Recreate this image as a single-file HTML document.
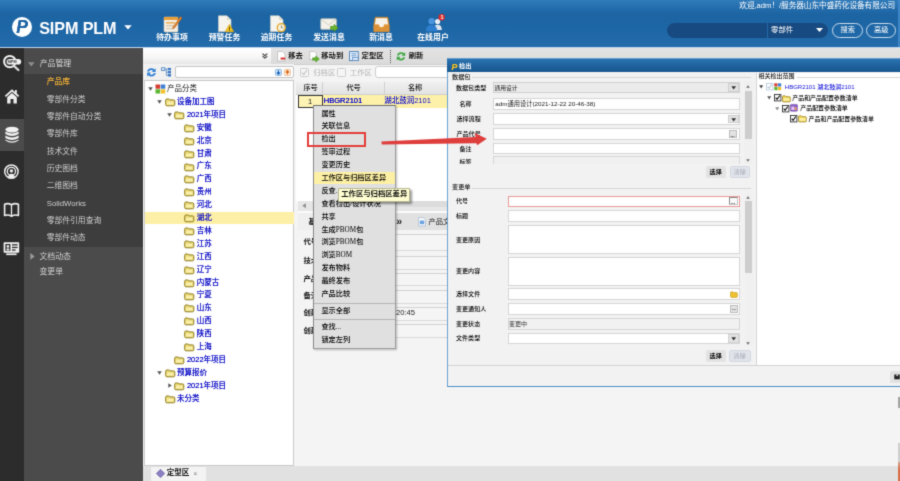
<!DOCTYPE html>
<html lang="zh-CN"><head><meta charset="utf-8"><title>SIPM PLM</title>
<style>
html,body{margin:0;padding:0;}
body{width:900px;height:481px;position:relative;overflow:hidden;background:#f4f4f4;font-family:"Liberation Sans","Noto Sans CJK SC",sans-serif;-webkit-text-size-adjust:none;}
#r{position:absolute;left:0;top:0;width:900px;height:481px;overflow:hidden;filter:url(#bl);}
#r div,#r svg{position:absolute;}
#r svg{overflow:visible;}
.t{white-space:nowrap;}
.m{font-family:"Liberation Serif","Noto Sans CJK SC",sans-serif;}
</style></head><body>
<svg width="0" height="0" style="position:absolute"><defs><filter id="bl" x="0" y="0" width="100%" height="100%" color-interpolation-filters="sRGB"><feConvolveMatrix order="3" kernelMatrix="0.02 0.1 0.02 0.1 0.52 0.1 0.02 0.1 0.02" divisor="1" edgeMode="duplicate" preserveAlpha="true"/></filter></defs></svg>
<div id="r">
<div style="left:0px;top:0px;width:900px;height:47px;background:linear-gradient(#2f7ab9 0%,#2973b3 10%,#1c64a2 30%,#1d66a5 55%,#236baa 100%);"></div>
<div style="left:898px;top:0px;width:2px;height:47px;background:#3d85c6;"></div>
<div style="left:0px;top:47px;width:900px;height:1px;background:#bcd6ec;"></div>
<div style="left:11.7px;top:16.7px;width:20.6px;height:20.6px;background:#fff;border-radius:50%;"></div>
<div class="t" style="left:16.3px;top:17.2px;font-size:17.5px;line-height:20px;color:#1f65a3;font-weight:bold;font-style:italic;text-shadow:0 0 .5px #1f65a3;">P</div>
<div class="t" style="left:39.2px;top:19.0px;font-size:16.2px;line-height:18px;color:#fff;font-weight:bold;letter-spacing:-0.12px;">SIPM PLM</div>
<svg style="left:124px;top:25px" width="8" height="5" viewBox="0 0 8 5"><path d="M0.3 0.3 L7.7 0.3 L4 4.6 Z" fill="#fff"/></svg>
<div class="t" style="left:142px;width:60px;text-align:center;top:32px;font-size:7.9px;line-height:12px;color:#fff;font-weight:bold;">待办事项</div>
<div class="t" style="left:194.5px;width:60px;text-align:center;top:32px;font-size:7.9px;line-height:12px;color:#fff;font-weight:bold;">预警任务</div>
<div class="t" style="left:246.5px;width:60px;text-align:center;top:32px;font-size:7.9px;line-height:12px;color:#fff;font-weight:bold;">逾期任务</div>
<div class="t" style="left:299px;width:60px;text-align:center;top:32px;font-size:7.9px;line-height:12px;color:#fff;font-weight:bold;">发送消息</div>
<div class="t" style="left:351px;width:60px;text-align:center;top:32px;font-size:7.9px;line-height:12px;color:#fff;font-weight:bold;">新消息</div>
<div class="t" style="left:403px;width:60px;text-align:center;top:32px;font-size:7.9px;line-height:12px;color:#fff;font-weight:bold;">在线用户</div>
<svg style="left:163px;top:15px" width="20" height="18" viewBox="0 0 20 18"><rect x="1" y="2" width="14" height="15" rx="1" fill="#f4efe6" stroke="#cbbfa8" stroke-width=".6"/>
<rect x="1" y="2" width="14" height="3" fill="#e9a03b"/>
<rect x="3" y="7" width="9" height="1.6" fill="#e8b05a"/><rect x="3" y="10" width="8" height="1.4" fill="#d8c9aa"/><rect x="3" y="13" width="6" height="1.2" fill="#d8c9aa"/>
<path d="M17.5 1.5 L19 3 L11.5 13 L9.5 14 L10 12 Z" fill="#e8872c" stroke="#a2561a" stroke-width=".5"/></svg>
<svg style="left:217px;top:15px" width="18" height="18" viewBox="0 0 18 18"><path d="M1.5 .8 L10 .8 L14 4.8 L14 16.5 L1.5 16.5 Z" fill="#f6f4ee" stroke="#d8d3c6" stroke-width=".6"/>
<path d="M10 .8 L10 4.8 L14 4.8 Z" fill="#dcd7ca"/>
<path d="M12.5 9.3 L16.8 16.8 L8.2 16.8 Z" fill="#f3c420" stroke="#c79a10" stroke-width=".6"/><rect x="12.1" y="11.8" width=".9" height="2.8" fill="#5a4300"/><rect x="12.1" y="15.1" width=".9" height=".9" fill="#5a4300"/></svg>
<svg style="left:269px;top:15px" width="18" height="18" viewBox="0 0 18 18"><path d="M1.5 .8 L10 .8 L14 4.8 L14 16.5 L1.5 16.5 Z" fill="#f6f4ee" stroke="#d8d3c6" stroke-width=".6"/>
<path d="M10 .8 L10 4.8 L14 4.8 Z" fill="#dcd7ca"/>
<circle cx="12.3" cy="12.6" r="4" fill="#f5f2e6" stroke="#e3a622" stroke-width="1.3"/><path d="M12.3 10.3 L12.3 12.8 L14.2 12.8" stroke="#7a6a40" stroke-width=".7" fill="none"/></svg>
<svg style="left:320px;top:18px" width="19" height="15" viewBox="0 0 19 15"><rect x=".8" y=".8" width="15.5" height="10.5" rx=".8" fill="#f4f2ea" stroke="#cfcabd" stroke-width=".7"/>
<path d="M1 1.2 L8.5 7 L16 1.2" stroke="#c9c3b2" stroke-width=".8" fill="none"/>
<path d="M10.5 8.3 L14 8.3 L14 6.3 L18.2 10 L14 13.6 L14 11.6 L10.5 11.6 Z" fill="#6cb52d" stroke="#3f8012" stroke-width=".5"/></svg>
<svg style="left:373px;top:16px" width="17" height="17" viewBox="0 0 17 17"><path d="M2.2 1.2 L14.8 1.2 L16.2 9 L16.2 15.6 L.8 15.6 L.8 9 Z" fill="#e9a24a" stroke="#c47f28" stroke-width=".6"/>
<path d="M3 2.2 L14 2.2 L15 8.2 L11 8.2 Q11 11 8.5 11 Q6 11 6 8.2 L2 8.2 Z" fill="#f7f3ea"/>
<path d="M.8 9 L5.4 9 Q5.6 12 8.5 12 Q11.4 12 11.6 9 L16.2 9 L16.2 15.6 L.8 15.6 Z" fill="#dd9237"/></svg>
<svg style="left:424px;top:13px" width="22" height="20" viewBox="0 0 22 20"><circle cx="13.6" cy="8.6" r="2.6" fill="#e9eef5"/><path d="M9.5 17 Q9.5 11.8 13.6 11.8 Q17.8 11.8 17.8 17 Z" fill="#dfe6ef"/>
<circle cx="7.6" cy="8.2" r="3.1" fill="#4a95de"/><path d="M2 18.3 Q2 12 7.6 12 Q13.2 12 13.2 18.3 Z" fill="#2e7fd0"/>
<circle cx="17.6" cy="4.2" r="3.2" fill="#dd2b2b"/></svg>
<div class="t" style="left:440.6px;top:13.4px;font-size:5.4px;line-height:8px;color:#fff;font-weight:bold;">1</div>
<div class="t" style="right:5px;top:0.3px;font-size:7.6px;line-height:12px;color:#fff;">欢迎,adm！/服务器山东中盛药化设备有限公司</div>
<div style="left:667px;top:22.5px;width:161px;height:15px;background:#174a80;border-radius:7.5px;"></div>
<div style="left:766.5px;top:22.5px;width:1.2px;height:15px;background:#2368aa;"></div>
<div class="t" style="left:771px;top:24.0px;font-size:7.4px;line-height:12px;color:#fff;">零部件</div>
<svg style="left:816px;top:28px" width="7" height="4" viewBox="0 0 7 4"><path d="M0 0 L7 0 L3.5 4 Z" fill="#fff"/></svg>
<div style="left:832px;top:22.5px;width:31px;height:15px;border:0.8px solid #c9dcee;border-radius:7.5px;box-sizing:border-box;"></div>
<div class="t" style="left:840.5px;top:24.0px;font-size:7.2px;line-height:12px;color:#fff;">搜索</div>
<div style="left:866px;top:22.5px;width:30px;height:15px;border:0.8px solid #c9dcee;border-radius:7.5px;box-sizing:border-box;"></div>
<div class="t" style="left:874px;top:24.0px;font-size:7.2px;line-height:12px;color:#fff;">高级</div>
<div style="left:0px;top:48px;width:24px;height:433px;background:#2c2c2c;"></div>
<div style="left:0px;top:119px;width:24px;height:31.5px;background:#4b4b4b;"></div>
<div style="left:24px;top:48px;width:119px;height:433px;background:#4b4b4b;"></div>
<div style="left:24px;top:73.9px;width:119px;height:173.2px;background:#3d3d3d;"></div>
<svg style="left:28px;top:61.6px" width="7" height="5" viewBox="0 0 7 5"><path d="M0 .3 L6.6 .3 L3.3 4.6 Z" fill="#8f8f8f"/></svg>
<div class="t" style="left:39.7px;top:57.8px;font-size:7.9px;line-height:12px;color:#dcdcdc;">产品管理</div>
<div class="t" style="left:46.7px;top:76.4px;font-size:7.8px;line-height:12px;color:#f5b236;font-weight:500;">产品库</div>
<div class="t" style="left:46.7px;top:93.7px;font-size:7.8px;line-height:12px;color:#cdcdcd;">零部件分类</div>
<div class="t" style="left:46.7px;top:111.0px;font-size:7.8px;line-height:12px;color:#cdcdcd;">零部件自动分类</div>
<div class="t" style="left:46.7px;top:128.3px;font-size:7.8px;line-height:12px;color:#cdcdcd;">零部件库</div>
<div class="t" style="left:46.7px;top:145.6px;font-size:7.8px;line-height:12px;color:#cdcdcd;">技术文件</div>
<div class="t" style="left:46.7px;top:162.9px;font-size:7.8px;line-height:12px;color:#cdcdcd;">历史图档</div>
<div class="t" style="left:46.7px;top:180.2px;font-size:7.8px;line-height:12px;color:#cdcdcd;">二维图档</div>
<div class="t" style="left:46.7px;top:197.5px;font-size:7.8px;line-height:12px;color:#cdcdcd;">SolidWorks</div>
<div class="t" style="left:46.7px;top:214.8px;font-size:7.8px;line-height:12px;color:#cdcdcd;">零部件引用查询</div>
<div class="t" style="left:46.7px;top:232.1px;font-size:7.8px;line-height:12px;color:#cdcdcd;">零部件动态</div>
<svg style="left:29.5px;top:253.2px" width="5" height="7" viewBox="0 0 5 7"><path d="M.3 0 L4.7 3.4 L.3 6.8 Z" fill="#9a9a9a"/></svg>
<div class="t" style="left:39.4px;top:250.7px;font-size:7.9px;line-height:12px;color:#d0d0d0;">文档动态</div>
<div class="t" style="left:39.4px;top:266.1px;font-size:7.9px;line-height:12px;color:#d0d0d0;">变更单</div>
<svg style="left:2px;top:53px" width="20" height="18" viewBox="0 0 20 18"><circle cx="7.8" cy="8.6" r="5.7" fill="none" stroke="#f2f2f2" stroke-width="2"/>
<rect x="4.6" y="6" width="14.6" height="5.6" rx="2.8" fill="#f2f2f2"/>
<path d="M12.4 13.4 L16.4 17" stroke="#dcdcdc" stroke-width="2.3" stroke-linecap="round"/></svg>
<div class="t" style="left:7.6px;top:58.8px;font-size:3.7px;line-height:6px;color:#2c2c2c;font-weight:bold;">SIPM</div>
<svg style="left:3.6px;top:87.6px" width="16" height="16" viewBox="0 0 16 16"><path d="M8 1.2 L.8 7.8 L2 9.1 L8 3.8 L14 9.1 L15.2 7.8 L12.8 5.6 L12.8 2 L11 2 L11 4 Z" fill="#f0f0f0"/>
<path d="M3.2 9.2 L8 5 L12.8 9.2 L12.8 15.4 L9.5 15.4 L9.5 11 L6.5 11 L6.5 15.4 L3.2 15.4 Z" fill="#f0f0f0"/></svg>
<svg style="left:4px;top:126px" width="16" height="18" viewBox="0 0 16 18"><ellipse cx="8" cy="3.6" rx="6.6" ry="2.9" fill="#f2f2f2"/>
<path d="M1.4 5.6 Q8 9.6 14.6 5.6 L14.6 8 Q8 12 1.4 8 Z" fill="#f2f2f2"/>
<path d="M1.4 9.6 Q8 13.6 14.6 9.6 L14.6 12 Q8 16 1.4 12 Z" fill="#f2f2f2"/>
<path d="M1.4 13.5 Q8 17.5 14.6 13.5 L14.6 14.6 Q8 19 1.4 14.6 Z" fill="#f2f2f2"/></svg>
<svg style="left:3px;top:163px" width="18" height="18" viewBox="0 0 18 18"><circle cx="8.4" cy="8.6" r="6.7" fill="none" stroke="#f0f0f0" stroke-width="1.5"/>
<circle cx="8.4" cy="8.4" r="4.1" fill="none" stroke="#f0f0f0" stroke-width="1.3"/>
<circle cx="8.4" cy="7.9" r="1.7" fill="#f0f0f0"/><path d="M5 15.3 Q5.2 10.8 8.4 10.8 Q11.6 10.8 11.8 15.3 Z" fill="#f0f0f0"/></svg>
<svg style="left:3px;top:202px" width="18" height="16" viewBox="0 0 18 16"><path d="M1.6 2.2 Q5.2 .8 8.5 2.8 Q11.8 .8 15.4 2.2 L15.4 13.4 Q11.8 12.2 8.5 14.2 Q5.2 12.2 1.6 13.4 Z" fill="none" stroke="#f0f0f0" stroke-width="1.6" stroke-linejoin="round"/>
<path d="M8.5 3 L8.5 14" stroke="#f0f0f0" stroke-width="1.3"/></svg>
<svg style="left:3px;top:241px" width="18" height="16" viewBox="0 0 18 16"><rect x=".6" y="1.2" width="15.6" height="10.6" rx=".8" fill="#f0f0f0"/>
<rect x="2.4" y="3" width="5" height="7" fill="#2c2c2c"/><circle cx="4.9" cy="5.4" r="1.3" fill="#f0f0f0"/><path d="M3.2 9.4 Q3.3 7.2 4.9 7.2 Q6.5 7.2 6.6 9.4 Z" fill="#f0f0f0"/>
<rect x="9" y="3.2" width="5.6" height="1.3" fill="#2c2c2c"/><rect x="9" y="5.8" width="5.6" height="1.3" fill="#2c2c2c"/><rect x="9" y="8.4" width="3.6" height="1.3" fill="#2c2c2c"/>
<rect x="3.2" y="12.4" width="10.4" height="1.7" fill="#f0f0f0"/></svg>
<div style="left:143px;top:48px;width:757px;height:433px;background:#f4f4f4;"></div>
<div style="left:143px;top:48px;width:128.3px;height:15.6px;background:linear-gradient(#ffffff,#f7f7f7 55%,#e6e6e6);"></div>
<div style="left:271px;top:48px;width:629px;height:15.6px;background:linear-gradient(#e3e3e3,#dbdbdb);"></div>
<div style="left:143px;top:63.6px;width:757px;height:0.8px;background:#cfcfcf;"></div>
<svg style="left:261.8px;top:53.4px" width="6" height="6" viewBox="0 0 6 6"><path d="M.5 .7 L2.9 2.7 L5.3 .7 M.5 3.1 L2.9 5.1 L5.3 3.1" stroke="#3a3a3a" stroke-width="1.1" fill="none"/></svg>
<svg style="left:277px;top:51px" width="9" height="10.5" viewBox="0 0 9 10.5"><path d="M.6 .5 L5.6 .5 L8 2.9 L8 10 L.6 10 Z" fill="#fff" stroke="#a9a9a9" stroke-width=".6"/>
<rect x="3.6" y="6.6" width="4.6" height="1.9" fill="#d92a2a"/></svg>
<div class="t" style="left:288.3px;top:50.2px;font-size:7.3px;line-height:12px;color:#111;font-weight:bold;">移去</div>
<svg style="left:309px;top:50.5px" width="11" height="11.5" viewBox="0 0 11 11.5"><path d="M.8 .5 L5.4 .5 L7.4 2.6 L7.4 8.6 L.8 8.6 Z" fill="#fff" stroke="#a9a9a9" stroke-width=".6"/>
<path d="M3.6 6.8 L6.8 6.8 L6.8 4.9 L10.4 8 L6.8 11.1 L6.8 9.2 L3.6 9.2 Z" fill="#5fb32a" stroke="#3a7d12" stroke-width=".4"/></svg>
<div class="t" style="left:321.3px;top:50.2px;font-size:7.3px;line-height:12px;color:#111;font-weight:bold;">移动到</div>
<svg style="left:349px;top:51px" width="10" height="10.5" viewBox="0 0 10 10.5"><rect x=".6" y=".6" width="8.6" height="9" fill="#eef5fc" stroke="#3f79b7" stroke-width=".9"/>
<rect x="2.4" y="2.3" width="5" height="1" fill="#5e94cc"/><rect x="2.4" y="4.3" width="5" height="1" fill="#5e94cc"/><rect x="3.6" y="6.6" width="5.6" height="3" fill="#d7e6f5" stroke="#3f79b7" stroke-width=".6"/></svg>
<div class="t" style="left:361.6px;top:50.2px;font-size:7.3px;line-height:12px;color:#111;font-weight:bold;">定型区</div>
<div style="left:390px;top:49.5px;width:0px;height:13px;border-left:1px dotted #555;"></div>
<svg style="left:396px;top:51px" width="10" height="10.5" viewBox="0 0 10 10.5"><path d="M1 4.4 Q1.8 1.2 5.2 1.2 Q7 1.2 8 2.4 L9.2 1.2 L9.2 4.8 L5.6 4.8 L6.8 3.6 Q6.2 2.8 5.2 2.8 Q3.2 2.8 2.8 4.4 Z" fill="#36a53a"/>
<path d="M9 6.2 Q8.2 9.4 4.8 9.4 Q3 9.4 2 8.2 L.8 9.4 L.8 5.8 L4.4 5.8 L3.2 7 Q3.8 7.8 4.8 7.8 Q6.8 7.8 7.2 6.2 Z" fill="#36a53a"/></svg>
<div class="t" style="left:408.8px;top:50.2px;font-size:7.3px;line-height:12px;color:#111;font-weight:bold;">刷新</div>
<div style="left:143px;top:64.4px;width:151.3px;height:15.6px;background:#f1f1f1;"></div>
<svg style="left:146px;top:66.5px" width="11" height="10.5" viewBox="0 0 11 10.5"><path d="M1 4.6 Q1.8 1.2 5.4 1.2 Q7.4 1.2 8.4 2.4 L9.6 1.2 L9.6 5 L5.8 5 L7.1 3.7 Q6.4 2.9 5.4 2.9 Q3.3 2.9 2.9 4.6 Z" fill="#2f7fd6"/>
<path d="M9.8 6 Q9 9.4 5.4 9.4 Q3.4 9.4 2.4 8.2 L1.2 9.4 L1.2 5.6 L5 5.6 L3.7 6.9 Q4.4 7.7 5.4 7.7 Q7.5 7.7 7.9 6 Z" fill="#2f7fd6"/></svg>
<svg style="left:161px;top:67px" width="11" height="10" viewBox="0 0 11 10"><rect x=".6" y=".8" width="3.2" height="2.6" fill="none" stroke="#3b78c2" stroke-width=".8"/><path d="M4 2.1 L6.4 2.1 M5.4 2.1 L5.4 8.4 L6.6 8.4 M5.4 5.2 L6.6 5.2" stroke="#3b78c2" stroke-width=".7" fill="none"/>
<rect x="6.8" y=".9" width="3.2" height="2.4" fill="#3b78c2"/><rect x="6.8" y="4" width="3.2" height="2.4" fill="#3b78c2"/><rect x="6.8" y="7.1" width="3.2" height="2.4" fill="#3b78c2"/></svg>
<div style="left:175px;top:66px;width:118.5px;height:12.4px;background:#fff;border:0.8px solid #c6c6c6;border-radius:2px;box-sizing:border-box;"></div>
<svg style="left:275px;top:69.2px" width="7" height="7" viewBox="0 0 7 7"><rect x=".4" y=".4" width="6" height="6" rx=".8" fill="#d9e9f8" stroke="#6f9fd2" stroke-width=".7"/><path d="M3.4 1.3 L3.4 4.8 M1.8 3.3 L3.4 5.2 L5 3.3" stroke="#1868c0" stroke-width="1.2" fill="none"/></svg>
<svg style="left:284.2px;top:69.2px" width="7" height="7" viewBox="0 0 7 7"><rect x=".4" y=".4" width="6" height="6" rx=".8" fill="#fdeedd" stroke="#e2ad80" stroke-width=".7"/><path d="M3.4 5.5 L3.4 2 M1.8 3.5 L3.4 1.6 L5 3.5" stroke="#e06a1a" stroke-width="1.2" fill="none"/></svg>
<div style="left:143.6px;top:80px;width:150.7px;height:386px;background:#fff;border:0.8px solid #c9c9c9;box-sizing:border-box;"></div>
<svg style="left:147.6px;top:87.0px" width="5" height="4" viewBox="0 0 5 4"><path d="M.2 .3 L4.8 .3 L2.5 3.8 Z" fill="#555"/></svg>
<svg style="left:155.2px;top:84.0px" width="11" height="10" viewBox="0 0 11 10"><rect x=".5" y=".5" width="4.6" height="4.2" fill="#d63b30"/><rect x="5.7" y=".5" width="4.6" height="4.2" fill="#3f7fd4"/><rect x=".5" y="5.3" width="4.6" height="4.2" fill="#5cb531"/><rect x="5.7" y="5.3" width="4.6" height="4.2" fill="#f0c22b"/></svg>
<div class="t" style="left:167px;top:83.0px;font-size:7.5px;line-height:12px;color:#111;">产品分类</div>
<svg style="left:157.4px;top:99.9px" width="5" height="4" viewBox="0 0 5 4"><path d="M.2 .3 L4.8 .3 L2.5 3.8 Z" fill="#555"/></svg>
<svg style="left:164.6px;top:98.0px" width="11" height="9" viewBox="0 0 11 9"><path d="M.7 2.2 Q.7 1 1.9 1 L3.8 1 Q4.6 1 5 1.9 L8.6 1.9 Q9.8 1.9 9.8 3.1 L9.8 6.6 Q9.8 7.8 8.6 7.8 L1.9 7.8 Q.7 7.8 .7 6.6 Z" fill="#e9d772" stroke="#8f7d22" stroke-width="1"/>
<path d="M1.8 3.6 L8.6 3.6 L8.6 6.6 L1.8 6.6 Z" fill="#f8efaa"/></svg>
<div class="t" style="left:177.10000000000002px;top:95.9px;font-size:7.5px;line-height:12px;color:#1414c8;text-shadow:0 0 .2px #1414c8;">设备加工图</div>
<svg style="left:167.2px;top:112.8px" width="5" height="4" viewBox="0 0 5 4"><path d="M.2 .3 L4.8 .3 L2.5 3.8 Z" fill="#555"/></svg>
<svg style="left:174.39999999999998px;top:110.89999999999999px" width="11" height="9" viewBox="0 0 11 9"><path d="M.7 2.2 Q.7 1 1.9 1 L3.8 1 Q4.6 1 5 1.9 L8.6 1.9 Q9.8 1.9 9.8 3.1 L9.8 6.6 Q9.8 7.8 8.6 7.8 L1.9 7.8 Q.7 7.8 .7 6.6 Z" fill="#e9d772" stroke="#8f7d22" stroke-width="1"/>
<path d="M1.8 3.6 L8.6 3.6 L8.6 6.6 L1.8 6.6 Z" fill="#f8efaa"/></svg>
<div class="t" style="left:186.9px;top:108.8px;font-size:7.5px;line-height:12px;color:#1414c8;text-shadow:0 0 .2px #1414c8;">2021年项目</div>
<svg style="left:184.2px;top:123.8px" width="11" height="9" viewBox="0 0 11 9"><path d="M.7 2.2 Q.7 1 1.9 1 L3.8 1 Q4.6 1 5 1.9 L8.6 1.9 Q9.8 1.9 9.8 3.1 L9.8 6.6 Q9.8 7.8 8.6 7.8 L1.9 7.8 Q.7 7.8 .7 6.6 Z" fill="#e9d772" stroke="#8f7d22" stroke-width="1"/>
<path d="M1.8 3.6 L8.6 3.6 L8.6 6.6 L1.8 6.6 Z" fill="#f8efaa"/></svg>
<div class="t" style="left:196.70000000000002px;top:121.7px;font-size:7.5px;line-height:12px;color:#1414c8;text-shadow:0 0 .2px #1414c8;">安徽</div>
<svg style="left:184.2px;top:136.7px" width="11" height="9" viewBox="0 0 11 9"><path d="M.7 2.2 Q.7 1 1.9 1 L3.8 1 Q4.6 1 5 1.9 L8.6 1.9 Q9.8 1.9 9.8 3.1 L9.8 6.6 Q9.8 7.8 8.6 7.8 L1.9 7.8 Q.7 7.8 .7 6.6 Z" fill="#e9d772" stroke="#8f7d22" stroke-width="1"/>
<path d="M1.8 3.6 L8.6 3.6 L8.6 6.6 L1.8 6.6 Z" fill="#f8efaa"/></svg>
<div class="t" style="left:196.70000000000002px;top:134.6px;font-size:7.5px;line-height:12px;color:#1414c8;text-shadow:0 0 .2px #1414c8;">北京</div>
<svg style="left:184.2px;top:149.6px" width="11" height="9" viewBox="0 0 11 9"><path d="M.7 2.2 Q.7 1 1.9 1 L3.8 1 Q4.6 1 5 1.9 L8.6 1.9 Q9.8 1.9 9.8 3.1 L9.8 6.6 Q9.8 7.8 8.6 7.8 L1.9 7.8 Q.7 7.8 .7 6.6 Z" fill="#e9d772" stroke="#8f7d22" stroke-width="1"/>
<path d="M1.8 3.6 L8.6 3.6 L8.6 6.6 L1.8 6.6 Z" fill="#f8efaa"/></svg>
<div class="t" style="left:196.70000000000002px;top:147.5px;font-size:7.5px;line-height:12px;color:#1414c8;text-shadow:0 0 .2px #1414c8;">甘肃</div>
<svg style="left:184.2px;top:162.5px" width="11" height="9" viewBox="0 0 11 9"><path d="M.7 2.2 Q.7 1 1.9 1 L3.8 1 Q4.6 1 5 1.9 L8.6 1.9 Q9.8 1.9 9.8 3.1 L9.8 6.6 Q9.8 7.8 8.6 7.8 L1.9 7.8 Q.7 7.8 .7 6.6 Z" fill="#e9d772" stroke="#8f7d22" stroke-width="1"/>
<path d="M1.8 3.6 L8.6 3.6 L8.6 6.6 L1.8 6.6 Z" fill="#f8efaa"/></svg>
<div class="t" style="left:196.70000000000002px;top:160.4px;font-size:7.5px;line-height:12px;color:#1414c8;text-shadow:0 0 .2px #1414c8;">广东</div>
<svg style="left:184.2px;top:175.4px" width="11" height="9" viewBox="0 0 11 9"><path d="M.7 2.2 Q.7 1 1.9 1 L3.8 1 Q4.6 1 5 1.9 L8.6 1.9 Q9.8 1.9 9.8 3.1 L9.8 6.6 Q9.8 7.8 8.6 7.8 L1.9 7.8 Q.7 7.8 .7 6.6 Z" fill="#e9d772" stroke="#8f7d22" stroke-width="1"/>
<path d="M1.8 3.6 L8.6 3.6 L8.6 6.6 L1.8 6.6 Z" fill="#f8efaa"/></svg>
<div class="t" style="left:196.70000000000002px;top:173.3px;font-size:7.5px;line-height:12px;color:#1414c8;text-shadow:0 0 .2px #1414c8;">广西</div>
<svg style="left:184.2px;top:188.29999999999998px" width="11" height="9" viewBox="0 0 11 9"><path d="M.7 2.2 Q.7 1 1.9 1 L3.8 1 Q4.6 1 5 1.9 L8.6 1.9 Q9.8 1.9 9.8 3.1 L9.8 6.6 Q9.8 7.8 8.6 7.8 L1.9 7.8 Q.7 7.8 .7 6.6 Z" fill="#e9d772" stroke="#8f7d22" stroke-width="1"/>
<path d="M1.8 3.6 L8.6 3.6 L8.6 6.6 L1.8 6.6 Z" fill="#f8efaa"/></svg>
<div class="t" style="left:196.70000000000002px;top:186.2px;font-size:7.5px;line-height:12px;color:#1414c8;text-shadow:0 0 .2px #1414c8;">贵州</div>
<svg style="left:184.2px;top:201.20000000000002px" width="11" height="9" viewBox="0 0 11 9"><path d="M.7 2.2 Q.7 1 1.9 1 L3.8 1 Q4.6 1 5 1.9 L8.6 1.9 Q9.8 1.9 9.8 3.1 L9.8 6.6 Q9.8 7.8 8.6 7.8 L1.9 7.8 Q.7 7.8 .7 6.6 Z" fill="#e9d772" stroke="#8f7d22" stroke-width="1"/>
<path d="M1.8 3.6 L8.6 3.6 L8.6 6.6 L1.8 6.6 Z" fill="#f8efaa"/></svg>
<div class="t" style="left:196.70000000000002px;top:199.1px;font-size:7.5px;line-height:12px;color:#1414c8;text-shadow:0 0 .2px #1414c8;">河北</div>
<div style="left:145px;top:211.6px;width:148.5px;height:12.9px;background:#fdf0a6;"></div>
<svg style="left:184.2px;top:214.1px" width="11" height="9" viewBox="0 0 11 9"><path d="M.7 2.2 Q.7 1 1.9 1 L3.8 1 Q4.6 1 5 1.9 L8.6 1.9 Q9.8 1.9 9.8 3.1 L9.8 6.6 Q9.8 7.8 8.6 7.8 L1.9 7.8 Q.7 7.8 .7 6.6 Z" fill="#e9d772" stroke="#8f7d22" stroke-width="1"/>
<path d="M1.8 3.6 L8.6 3.6 L8.6 6.6 L1.8 6.6 Z" fill="#f8efaa"/></svg>
<div class="t" style="left:196.70000000000002px;top:212.0px;font-size:7.5px;line-height:12px;color:#1414c8;text-shadow:0 0 .2px #1414c8;">湖北</div>
<svg style="left:184.2px;top:227.0px" width="11" height="9" viewBox="0 0 11 9"><path d="M.7 2.2 Q.7 1 1.9 1 L3.8 1 Q4.6 1 5 1.9 L8.6 1.9 Q9.8 1.9 9.8 3.1 L9.8 6.6 Q9.8 7.8 8.6 7.8 L1.9 7.8 Q.7 7.8 .7 6.6 Z" fill="#e9d772" stroke="#8f7d22" stroke-width="1"/>
<path d="M1.8 3.6 L8.6 3.6 L8.6 6.6 L1.8 6.6 Z" fill="#f8efaa"/></svg>
<div class="t" style="left:196.70000000000002px;top:224.9px;font-size:7.5px;line-height:12px;color:#1414c8;text-shadow:0 0 .2px #1414c8;">吉林</div>
<svg style="left:184.2px;top:239.9px" width="11" height="9" viewBox="0 0 11 9"><path d="M.7 2.2 Q.7 1 1.9 1 L3.8 1 Q4.6 1 5 1.9 L8.6 1.9 Q9.8 1.9 9.8 3.1 L9.8 6.6 Q9.8 7.8 8.6 7.8 L1.9 7.8 Q.7 7.8 .7 6.6 Z" fill="#e9d772" stroke="#8f7d22" stroke-width="1"/>
<path d="M1.8 3.6 L8.6 3.6 L8.6 6.6 L1.8 6.6 Z" fill="#f8efaa"/></svg>
<div class="t" style="left:196.70000000000002px;top:237.8px;font-size:7.5px;line-height:12px;color:#1414c8;text-shadow:0 0 .2px #1414c8;">江苏</div>
<svg style="left:184.2px;top:252.80000000000004px" width="11" height="9" viewBox="0 0 11 9"><path d="M.7 2.2 Q.7 1 1.9 1 L3.8 1 Q4.6 1 5 1.9 L8.6 1.9 Q9.8 1.9 9.8 3.1 L9.8 6.6 Q9.8 7.8 8.6 7.8 L1.9 7.8 Q.7 7.8 .7 6.6 Z" fill="#e9d772" stroke="#8f7d22" stroke-width="1"/>
<path d="M1.8 3.6 L8.6 3.6 L8.6 6.6 L1.8 6.6 Z" fill="#f8efaa"/></svg>
<div class="t" style="left:196.70000000000002px;top:250.7px;font-size:7.5px;line-height:12px;color:#1414c8;text-shadow:0 0 .2px #1414c8;">江西</div>
<svg style="left:184.2px;top:265.70000000000005px" width="11" height="9" viewBox="0 0 11 9"><path d="M.7 2.2 Q.7 1 1.9 1 L3.8 1 Q4.6 1 5 1.9 L8.6 1.9 Q9.8 1.9 9.8 3.1 L9.8 6.6 Q9.8 7.8 8.6 7.8 L1.9 7.8 Q.7 7.8 .7 6.6 Z" fill="#e9d772" stroke="#8f7d22" stroke-width="1"/>
<path d="M1.8 3.6 L8.6 3.6 L8.6 6.6 L1.8 6.6 Z" fill="#f8efaa"/></svg>
<div class="t" style="left:196.70000000000002px;top:263.6px;font-size:7.5px;line-height:12px;color:#1414c8;text-shadow:0 0 .2px #1414c8;">辽宁</div>
<svg style="left:184.2px;top:278.6px" width="11" height="9" viewBox="0 0 11 9"><path d="M.7 2.2 Q.7 1 1.9 1 L3.8 1 Q4.6 1 5 1.9 L8.6 1.9 Q9.8 1.9 9.8 3.1 L9.8 6.6 Q9.8 7.8 8.6 7.8 L1.9 7.8 Q.7 7.8 .7 6.6 Z" fill="#e9d772" stroke="#8f7d22" stroke-width="1"/>
<path d="M1.8 3.6 L8.6 3.6 L8.6 6.6 L1.8 6.6 Z" fill="#f8efaa"/></svg>
<div class="t" style="left:196.70000000000002px;top:276.5px;font-size:7.5px;line-height:12px;color:#1414c8;text-shadow:0 0 .2px #1414c8;">内蒙古</div>
<svg style="left:184.2px;top:291.5px" width="11" height="9" viewBox="0 0 11 9"><path d="M.7 2.2 Q.7 1 1.9 1 L3.8 1 Q4.6 1 5 1.9 L8.6 1.9 Q9.8 1.9 9.8 3.1 L9.8 6.6 Q9.8 7.8 8.6 7.8 L1.9 7.8 Q.7 7.8 .7 6.6 Z" fill="#e9d772" stroke="#8f7d22" stroke-width="1"/>
<path d="M1.8 3.6 L8.6 3.6 L8.6 6.6 L1.8 6.6 Z" fill="#f8efaa"/></svg>
<div class="t" style="left:196.70000000000002px;top:289.4px;font-size:7.5px;line-height:12px;color:#1414c8;text-shadow:0 0 .2px #1414c8;">宁夏</div>
<svg style="left:184.2px;top:304.40000000000003px" width="11" height="9" viewBox="0 0 11 9"><path d="M.7 2.2 Q.7 1 1.9 1 L3.8 1 Q4.6 1 5 1.9 L8.6 1.9 Q9.8 1.9 9.8 3.1 L9.8 6.6 Q9.8 7.8 8.6 7.8 L1.9 7.8 Q.7 7.8 .7 6.6 Z" fill="#e9d772" stroke="#8f7d22" stroke-width="1"/>
<path d="M1.8 3.6 L8.6 3.6 L8.6 6.6 L1.8 6.6 Z" fill="#f8efaa"/></svg>
<div class="t" style="left:196.70000000000002px;top:302.3px;font-size:7.5px;line-height:12px;color:#1414c8;text-shadow:0 0 .2px #1414c8;">山东</div>
<svg style="left:184.2px;top:317.30000000000007px" width="11" height="9" viewBox="0 0 11 9"><path d="M.7 2.2 Q.7 1 1.9 1 L3.8 1 Q4.6 1 5 1.9 L8.6 1.9 Q9.8 1.9 9.8 3.1 L9.8 6.6 Q9.8 7.8 8.6 7.8 L1.9 7.8 Q.7 7.8 .7 6.6 Z" fill="#e9d772" stroke="#8f7d22" stroke-width="1"/>
<path d="M1.8 3.6 L8.6 3.6 L8.6 6.6 L1.8 6.6 Z" fill="#f8efaa"/></svg>
<div class="t" style="left:196.70000000000002px;top:315.2px;font-size:7.5px;line-height:12px;color:#1414c8;text-shadow:0 0 .2px #1414c8;">山西</div>
<svg style="left:184.2px;top:330.20000000000005px" width="11" height="9" viewBox="0 0 11 9"><path d="M.7 2.2 Q.7 1 1.9 1 L3.8 1 Q4.6 1 5 1.9 L8.6 1.9 Q9.8 1.9 9.8 3.1 L9.8 6.6 Q9.8 7.8 8.6 7.8 L1.9 7.8 Q.7 7.8 .7 6.6 Z" fill="#e9d772" stroke="#8f7d22" stroke-width="1"/>
<path d="M1.8 3.6 L8.6 3.6 L8.6 6.6 L1.8 6.6 Z" fill="#f8efaa"/></svg>
<div class="t" style="left:196.70000000000002px;top:328.1px;font-size:7.5px;line-height:12px;color:#1414c8;text-shadow:0 0 .2px #1414c8;">陕西</div>
<svg style="left:184.2px;top:343.1px" width="11" height="9" viewBox="0 0 11 9"><path d="M.7 2.2 Q.7 1 1.9 1 L3.8 1 Q4.6 1 5 1.9 L8.6 1.9 Q9.8 1.9 9.8 3.1 L9.8 6.6 Q9.8 7.8 8.6 7.8 L1.9 7.8 Q.7 7.8 .7 6.6 Z" fill="#e9d772" stroke="#8f7d22" stroke-width="1"/>
<path d="M1.8 3.6 L8.6 3.6 L8.6 6.6 L1.8 6.6 Z" fill="#f8efaa"/></svg>
<div class="t" style="left:196.70000000000002px;top:341.0px;font-size:7.5px;line-height:12px;color:#1414c8;text-shadow:0 0 .2px #1414c8;">上海</div>
<svg style="left:174.39999999999998px;top:356.00000000000006px" width="11" height="9" viewBox="0 0 11 9"><path d="M.7 2.2 Q.7 1 1.9 1 L3.8 1 Q4.6 1 5 1.9 L8.6 1.9 Q9.8 1.9 9.8 3.1 L9.8 6.6 Q9.8 7.8 8.6 7.8 L1.9 7.8 Q.7 7.8 .7 6.6 Z" fill="#e9d772" stroke="#8f7d22" stroke-width="1"/>
<path d="M1.8 3.6 L8.6 3.6 L8.6 6.6 L1.8 6.6 Z" fill="#f8efaa"/></svg>
<div class="t" style="left:186.9px;top:353.9px;font-size:7.5px;line-height:12px;color:#1414c8;text-shadow:0 0 .2px #1414c8;">2022年项目</div>
<svg style="left:157.4px;top:370.8px" width="5" height="4" viewBox="0 0 5 4"><path d="M.2 .3 L4.8 .3 L2.5 3.8 Z" fill="#555"/></svg>
<svg style="left:164.6px;top:368.90000000000003px" width="11" height="9" viewBox="0 0 11 9"><path d="M.7 2.2 Q.7 1 1.9 1 L3.8 1 Q4.6 1 5 1.9 L8.6 1.9 Q9.8 1.9 9.8 3.1 L9.8 6.6 Q9.8 7.8 8.6 7.8 L1.9 7.8 Q.7 7.8 .7 6.6 Z" fill="#e9d772" stroke="#8f7d22" stroke-width="1"/>
<path d="M1.8 3.6 L8.6 3.6 L8.6 6.6 L1.8 6.6 Z" fill="#f8efaa"/></svg>
<div class="t" style="left:177.10000000000002px;top:366.8px;font-size:7.5px;line-height:12px;color:#1414c8;text-shadow:0 0 .2px #1414c8;">预算报价</div>
<svg style="left:167.7px;top:383.2px" width="4" height="5" viewBox="0 0 4 5"><path d="M.3 .2 L3.8 2.5 L.3 4.8 Z" fill="#555"/></svg>
<svg style="left:174.39999999999998px;top:381.8px" width="11" height="9" viewBox="0 0 11 9"><path d="M.7 2.2 Q.7 1 1.9 1 L3.8 1 Q4.6 1 5 1.9 L8.6 1.9 Q9.8 1.9 9.8 3.1 L9.8 6.6 Q9.8 7.8 8.6 7.8 L1.9 7.8 Q.7 7.8 .7 6.6 Z" fill="#e9d772" stroke="#8f7d22" stroke-width="1"/>
<path d="M1.8 3.6 L8.6 3.6 L8.6 6.6 L1.8 6.6 Z" fill="#f8efaa"/></svg>
<div class="t" style="left:186.9px;top:379.7px;font-size:7.5px;line-height:12px;color:#1414c8;text-shadow:0 0 .2px #1414c8;">2021年项目</div>
<svg style="left:164.6px;top:394.70000000000005px" width="11" height="9" viewBox="0 0 11 9"><path d="M.7 2.2 Q.7 1 1.9 1 L3.8 1 Q4.6 1 5 1.9 L8.6 1.9 Q9.8 1.9 9.8 3.1 L9.8 6.6 Q9.8 7.8 8.6 7.8 L1.9 7.8 Q.7 7.8 .7 6.6 Z" fill="#e9d772" stroke="#8f7d22" stroke-width="1"/>
<path d="M1.8 3.6 L8.6 3.6 L8.6 6.6 L1.8 6.6 Z" fill="#f8efaa"/></svg>
<div class="t" style="left:177.10000000000002px;top:392.6px;font-size:7.5px;line-height:12px;color:#1414c8;text-shadow:0 0 .2px #1414c8;">未分类</div>
<div style="left:143px;top:466px;width:757px;height:15px;background:#e1e1e1;"></div>
<div style="left:151px;top:466.5px;width:54.5px;height:14.5px;background:#f3f3f3;"></div>
<svg style="left:156px;top:468.6px" width="9" height="9" viewBox="0 0 9 9"><path d="M4.5 .4 L8.6 4.5 L4.5 8.6 L.4 4.5 Z" fill="#8d7fc4" stroke="#5c4f9a" stroke-width=".7"/></svg>
<div class="t" style="left:166.8px;top:467.4px;font-size:7.5px;line-height:12px;color:#111;font-weight:bold;">定型区</div>
<div class="t" style="left:193.5px;top:467.6px;font-size:6.5px;line-height:12px;color:#777;">×</div>
<svg style="left:300px;top:68.3px" width="9" height="9" viewBox="0 0 9 9"><rect x=".5" y=".5" width="8" height="8" rx="1" fill="#f6f6f6" stroke="#c4c4c4" stroke-width=".8"/><path d="M2 4.6 L3.8 6.6 L7 2" stroke="#c2c2c2" stroke-width="1.2" fill="none"/></svg>
<div class="t" style="left:313.3px;top:67.2px;font-size:7.3px;line-height:12px;color:#b4b4b4;">归档区</div>
<svg style="left:337px;top:68.3px" width="9" height="9" viewBox="0 0 9 9"><rect x=".5" y=".5" width="8" height="8" rx="1" fill="#f6f6f6" stroke="#c4c4c4" stroke-width=".8"/></svg>
<div class="t" style="left:350px;top:67.2px;font-size:7.3px;line-height:12px;color:#b4b4b4;">工作区</div>
<div style="left:375px;top:66.2px;width:80px;height:12.2px;background:#fff;border:0.8px solid #cdcdcd;border-radius:3px;box-sizing:border-box;"></div>
<div style="left:296px;top:81.5px;width:152px;height:120px;background:#fff;"></div>
<div style="left:296px;top:81.5px;width:152px;height:13.5px;background:linear-gradient(#f0f0f0,#e3e3e3);border-bottom:0.7px solid #cfcfcf;box-sizing:border-box;"></div>
<div style="left:322px;top:81.5px;width:0.8px;height:13.5px;background:#cfcfcf;"></div>
<div style="left:384px;top:81.5px;width:0.8px;height:13.5px;background:#cfcfcf;"></div>
<div class="t" style="left:303.4px;top:82.4px;font-size:7.2px;line-height:12px;color:#111;font-weight:500;">序号</div>
<div class="t" style="left:346.4px;top:82.4px;font-size:7.2px;line-height:12px;color:#111;font-weight:500;">代号</div>
<div class="t" style="left:407.9px;top:82.4px;font-size:7.2px;line-height:12px;color:#111;font-weight:500;">名称</div>
<div style="left:298px;top:95px;width:150px;height:12.8px;background:#fdf1a9;"></div>
<div style="left:298px;top:95px;width:24.5px;height:13px;border:1px solid #333;box-sizing:border-box;background:#fdf3b4;"></div>
<div class="t" style="left:308px;top:95.6px;font-size:7.5px;line-height:12px;color:#222;">1</div>
<div class="t" style="left:323.8px;top:95.4px;font-size:7.5px;line-height:12px;color:#0000d6;font-weight:500;text-shadow:0 0 .15px #0000d6;">HBGR2101</div>
<div class="t" style="left:384.2px;top:95.4px;font-size:7.5px;line-height:12px;color:#0000d6;font-weight:500;">湖北鼓润2101</div>
<div style="left:298px;top:201.2px;width:150px;height:9.6px;background:#e6e6e6;"></div>
<div style="left:313px;top:201.2px;width:135px;height:5.8px;background:#dcdcdc;"></div>
<svg style="left:302px;top:203.3px" width="4" height="5.4" viewBox="0 0 4 5.4"><path d="M3.8 .2 L.3 2.7 L3.8 5.2 Z" fill="#8a8a8a"/></svg>
<div style="left:298px;top:211px;width:150px;height:2.4px;background:#fbfbfb;"></div>
<div style="left:298px;top:213.4px;width:150px;height:16.2px;background:#e1e1e1;"></div>
<div style="left:298px;top:213.4px;width:60px;height:16.2px;background:#efefef;"></div>
<div class="t" style="left:308.6px;top:216.0px;font-size:7.4px;line-height:12px;color:#111;font-weight:bold;">基本属性</div>
<div class="t" style="left:396.2px;top:215.4px;font-size:10.5px;line-height:12px;color:#222;font-weight:bold;">»</div>
<svg style="left:418px;top:216.5px" width="8" height="9.5" viewBox="0 0 8 9.5"><path d="M.5 .5 L5.2 .5 L7.4 2.7 L7.4 9 L.5 9 Z" fill="#f4f8fd" stroke="#9ab0c8" stroke-width=".6"/><rect x="1.8" y="3.6" width="4.4" height="3.6" fill="#6aa2dd"/></svg>
<div class="t" style="left:428.5px;top:216.0px;font-size:7.3px;line-height:12px;color:#111;">产品文档</div>
<div style="left:322px;top:234px;width:130px;height:17px;border-top:0.8px solid #d2d2d2;border-bottom:0.8px solid #d9d9d9;box-sizing:border-box;background:#f5f5f5;"></div>
<div style="left:322px;top:255.6px;width:130px;height:14.1px;border-top:0.8px solid #d2d2d2;border-bottom:0.8px solid #d9d9d9;box-sizing:border-box;background:#f5f5f5;"></div>
<div style="left:322px;top:272.6px;width:130px;height:13.4px;border-top:0.8px solid #d2d2d2;border-bottom:0.8px solid #d9d9d9;box-sizing:border-box;background:#f5f5f5;"></div>
<div style="left:322px;top:289.6px;width:130px;height:14.0px;border-top:0.8px solid #d2d2d2;border-bottom:0.8px solid #d9d9d9;box-sizing:border-box;background:#f5f5f5;"></div>
<div style="left:322px;top:306.6px;width:130px;height:14.0px;border-top:0.8px solid #d2d2d2;border-bottom:0.8px solid #d9d9d9;box-sizing:border-box;background:#f5f5f5;"></div>
<div style="left:322px;top:324.3px;width:130px;height:14.2px;border-top:0.8px solid #d2d2d2;border-bottom:0.8px solid #d9d9d9;box-sizing:border-box;background:#f5f5f5;"></div>
<div class="t" style="left:303.4px;top:236.3px;font-size:7.4px;line-height:12px;color:#111;font-weight:700;">代号</div>
<div class="t" style="left:303.4px;top:254.5px;font-size:7.4px;line-height:12px;color:#111;font-weight:700;">技术</div>
<div class="t" style="left:303.4px;top:272.5px;font-size:7.4px;line-height:12px;color:#111;font-weight:700;">产品</div>
<div class="t" style="left:303.4px;top:290.3px;font-size:7.4px;line-height:12px;color:#111;font-weight:700;">备注</div>
<div class="t" style="left:303.4px;top:307.0px;font-size:7.4px;line-height:12px;color:#111;font-weight:700;">创建</div>
<div class="t" style="left:303.4px;top:325.0px;font-size:7.4px;line-height:12px;color:#111;font-weight:700;">创建</div>
<div class="t" style="left:396px;top:307.2px;font-size:7.6px;line-height:12px;color:#222;">20:45</div>
<div style="left:313.0px;top:104.8px;width:83.0px;height:244.3px;background:#e0e0e0;border:0.8px solid #9c9c9c;border-top-color:#6e6e6e;border-left-color:#8a8a8a;box-sizing:border-box;box-shadow:1px 1px 2px rgba(0,0,0,.25);"></div>
<div style="left:314.2px;top:171.6px;width:81.2px;height:12.9px;background:#fdf0a4;"></div>
<div class="t m" style="left:321.4px;top:107.6px;font-size:7.2px;line-height:12px;color:#000;font-weight:500;">属性</div>
<div class="t m" style="left:321.4px;top:120.48px;font-size:7.2px;line-height:12px;color:#000;font-weight:500;">关联信息</div>
<div class="t m" style="left:321.4px;top:133.36px;font-size:7.2px;line-height:12px;color:#000;font-weight:500;">检出</div>
<div class="t m" style="left:321.4px;top:146.24px;font-size:7.2px;line-height:12px;color:#000;font-weight:500;">签审过程</div>
<div class="t m" style="left:321.4px;top:159.12px;font-size:7.2px;line-height:12px;color:#000;font-weight:500;">变更历史</div>
<div class="t m" style="left:321.4px;top:172.0px;font-size:7.2px;line-height:12px;color:#000;font-weight:500;">工作区与归档区差异</div>
<div class="t m" style="left:321.4px;top:184.88px;font-size:7.2px;line-height:12px;color:#000;font-weight:500;">反查...</div>
<div class="t m" style="left:321.4px;top:197.76px;font-size:7.2px;line-height:12px;color:#000;font-weight:500;">查看检出/设计状况</div>
<div class="t m" style="left:321.4px;top:210.64px;font-size:7.2px;line-height:12px;color:#000;font-weight:500;">共享</div>
<div class="t m" style="left:321.4px;top:223.52px;font-size:7.2px;line-height:12px;color:#000;font-weight:500;">生成PBOM包</div>
<div class="t m" style="left:321.4px;top:236.4px;font-size:7.2px;line-height:12px;color:#000;font-weight:500;">浏览PBOM包</div>
<div class="t m" style="left:321.4px;top:249.28px;font-size:7.2px;line-height:12px;color:#000;font-weight:500;">浏览BOM</div>
<div class="t m" style="left:321.4px;top:262.16px;font-size:7.2px;line-height:12px;color:#000;font-weight:500;">发布物料</div>
<div class="t m" style="left:321.4px;top:275.04px;font-size:7.2px;line-height:12px;color:#000;font-weight:500;">最终发布</div>
<div class="t m" style="left:321.4px;top:287.92px;font-size:7.2px;line-height:12px;color:#000;font-weight:500;">产品比较</div>
<div style="left:314.2px;top:303.2px;width:81.2px;height:0.8px;background:#b5b5b5;"></div>
<div class="t m" style="left:321.4px;top:305.3px;font-size:7.2px;line-height:12px;color:#000;font-weight:500;">显示全部</div>
<div style="left:314.2px;top:319.2px;width:81.2px;height:0.8px;background:#b5b5b5;"></div>
<div class="t m" style="left:321.4px;top:321.2px;font-size:7.2px;line-height:12px;color:#000;font-weight:500;">查找...</div>
<div class="t m" style="left:321.4px;top:334.0px;font-size:7.2px;line-height:12px;color:#000;font-weight:500;">锁定左列</div>
<div style="left:307.4px;top:132.0px;width:58.4px;height:14.6px;border:2.1px solid #e23e3a;box-sizing:border-box;"></div>
<div style="left:338.2px;top:187.6px;width:72px;height:14px;background:#ffffd2;border:0.6px solid #b9b994;box-sizing:border-box;box-shadow:1.5px 1.5px 2px rgba(0,0,0,.4);"></div>
<div class="t" style="left:341.2px;top:188.4px;font-size:7.35px;line-height:12px;color:#111;font-weight:bold;">工作区与归档区差异</div>
<div style="left:446.8px;top:58.3px;width:453.5px;height:329.2px;background:#f2f2f2;border:1px solid #4a8fc8;border-left:1.6px solid #6aa2d2;border-right:none;box-sizing:border-box;"></div>
<div style="left:447.3px;top:58.3px;width:453px;height:13.4px;background:linear-gradient(#8fbbe0 0,#2b73b1 1.2px,#1d609c 60%,#19588f);"></div>
<div class="t" style="left:451.4px;top:61.5px;font-size:8.6px;line-height:10px;color:#f4c832;font-weight:bold;font-style:italic;text-shadow:0 0 .7px #6a4a00,0 0 .4px #f4c832;">P</div>
<div class="t" style="left:459.0px;top:59.8px;font-size:6.2px;line-height:12px;color:#fff;font-weight:bold;">检出</div>
<div style="left:755.8px;top:73px;width:145px;height:292.5px;background:#fff;border-left:0.7px solid #d6d6d6;"></div>
<div style="left:448.3px;top:365.2px;width:452px;height:0.8px;background:#d4d4d4;"></div>
<div style="left:472px;top:76.8px;width:279px;height:0.7px;background:#d6d6d6;"></div>
<div class="t" style="left:452px;top:71.5px;font-size:6.2px;line-height:10px;color:#111;font-weight:500;">数据包</div>
<div class="t" style="left:456px;top:82.6px;font-size:6.05px;line-height:10px;color:#000;font-weight:500;">数据包类型</div>
<div class="t" style="left:459.5px;top:98.8px;font-size:6.05px;line-height:10px;color:#000;font-weight:500;">名称</div>
<div class="t" style="left:456.5px;top:114.2px;font-size:6.05px;line-height:10px;color:#000;font-weight:500;">选择流程</div>
<div class="t" style="left:456.5px;top:129.2px;font-size:6.05px;line-height:10px;color:#000;font-weight:500;">产品代号</div>
<div class="t" style="left:459.5px;top:144.3px;font-size:6.05px;line-height:10px;color:#000;font-weight:500;">备注</div>
<div class="t" style="left:459.5px;top:157.0px;font-size:6.05px;line-height:10px;color:#000;font-weight:500;">标签</div>
<div style="left:493.3px;top:81.8px;width:246.5px;height:11.6px;background:#ebebeb;border:0.7px solid #d0d0d0;box-sizing:border-box;"></div>
<div class="t" style="left:494.6px;top:82.6px;font-size:5.75px;line-height:10px;color:#222;">通用设计</div>
<div style="left:728.3px;top:83.4px;width:10.4px;height:8.6px;background:#e2e2e2;border:0.5px solid #cfcfcf;box-sizing:border-box;"></div>
<svg style="left:730.8px;top:86px" width="5.4" height="3.6" viewBox="0 0 5.4 3.6"><path d="M.3 .3 L5.1 .3 L2.7 3.4 Z" fill="#333"/></svg>
<div style="left:493.3px;top:97.8px;width:246.5px;height:11.8px;background:#fff;border:0.7px solid #d6d6d6;box-sizing:border-box;"></div>
<div class="t" style="left:495.3px;top:98.8px;font-size:6.25px;line-height:10px;color:#222;">adm通用设计(2021-12-22 20-46-38)</div>
<div style="left:493.3px;top:113.2px;width:246.5px;height:11.8px;background:#fff;border:0.7px solid #d6d6d6;box-sizing:border-box;"></div>
<div style="left:728.3px;top:114.8px;width:10.4px;height:8.6px;background:#e2e2e2;border:0.5px solid #cfcfcf;box-sizing:border-box;"></div>
<svg style="left:730.8px;top:117.6px" width="5.4" height="3.6" viewBox="0 0 5.4 3.6"><path d="M.3 .3 L5.1 .3 L2.7 3.4 Z" fill="#333"/></svg>
<div style="left:493.3px;top:128.3px;width:246.5px;height:11.8px;background:#fff;border:0.7px solid #d6d6d6;box-sizing:border-box;"></div>
<div style="left:728.5px;top:130.3px;width:8.6px;height:7.8px;background:#e3e3e3;border:0.5px solid #bdbdbd;box-sizing:border-box;"></div>
<div class="t" style="left:730.6px;top:131.6px;font-size:5px;line-height:6px;color:#222;font-weight:bold;">...</div>
<div style="left:493.3px;top:142.6px;width:246.5px;height:11.2px;background:#fff;border:0.7px solid #d6d6d6;box-sizing:border-box;"></div>
<div style="left:493.3px;top:156.2px;width:246.5px;height:7.8px;background:#f0f0f0;border:0.7px solid #d6d6d6;border-bottom:none;box-sizing:border-box;"></div>
<div style="left:449px;top:164px;width:300px;height:20px;background:#f2f2f2;"></div>
<div style="left:744px;top:81px;width:9px;height:82.6px;background:#f0f0f0;"></div>
<div style="left:744.6px;top:90.6px;width:7.8px;height:48px;background:#cdcdcd;"></div>
<svg style="left:746.4px;top:84.6px" width="4" height="3" viewBox="0 0 4 3"><path d="M2 .2 L3.8 2.8 L.2 2.8 Z" fill="#6a6a6a"/></svg>
<svg style="left:746.4px;top:158.6px" width="4" height="3" viewBox="0 0 4 3"><path d="M.2 .2 L3.8 .2 L2 2.8 Z" fill="#6a6a6a"/></svg>
<div style="left:706px;top:166px;width:20px;height:12.4px;background:#e3e3e3;border-radius:1.5px;"></div>
<div class="t" style="left:709.6px;top:167.4px;font-size:6.05px;line-height:10px;color:#111;text-shadow:0 0 .3px #111;">选择</div>
<div style="left:730px;top:166px;width:20px;height:12.4px;background:#e1e3ea;border:0.6px solid #d3d8e2;box-sizing:border-box;border-radius:1.5px;"></div>
<div class="t" style="left:733.8px;top:167.4px;font-size:6.05px;line-height:10px;color:#a4a9b5;">清除</div>
<div style="left:472px;top:187.8px;width:279px;height:0.7px;background:#d6d6d6;"></div>
<div class="t" style="left:452px;top:182.4px;font-size:6.2px;line-height:10px;color:#111;font-weight:500;">变更单</div>
<div class="t" style="left:456px;top:196.2px;font-size:6.05px;line-height:10px;color:#000;font-weight:500;">代号</div>
<div class="t" style="left:456px;top:210.8px;font-size:6.05px;line-height:10px;color:#000;font-weight:500;">标题</div>
<div class="t" style="left:456px;top:234.5px;font-size:6.05px;line-height:10px;color:#000;font-weight:500;">变更原因</div>
<div class="t" style="left:456px;top:266.0px;font-size:6.05px;line-height:10px;color:#000;font-weight:500;">变更内容</div>
<div class="t" style="left:456px;top:289.2px;font-size:6.05px;line-height:10px;color:#000;font-weight:500;">选择文件</div>
<div class="t" style="left:456px;top:304.0px;font-size:6.05px;line-height:10px;color:#000;font-weight:500;">变更通知人</div>
<div class="t" style="left:456px;top:318.9px;font-size:6.05px;line-height:10px;color:#000;font-weight:500;">变更状态</div>
<div class="t" style="left:456px;top:333.4px;font-size:6.05px;line-height:10px;color:#000;font-weight:500;">文件类型</div>
<div style="left:507.5px;top:195.7px;width:232.3px;height:11px;background:#fff;border:0.8px solid #ea9a9a;box-sizing:border-box;"></div>
<div style="left:728.8px;top:197.2px;width:9px;height:7.8px;background:#fafafa;border:0.6px solid #8a8a8a;border-right-color:#c4c4c4;border-bottom-color:#c4c4c4;box-sizing:border-box;"></div>
<div class="t" style="left:730.9px;top:198.7px;font-size:5.2px;line-height:6px;color:#111;font-weight:bold;">...</div>
<div style="left:507.5px;top:209.6px;width:232.3px;height:12.2px;background:#fff;border:0.7px solid #d6d6d6;box-sizing:border-box;"></div>
<div style="left:507.5px;top:224.9px;width:232.3px;height:29.2px;background:#fff;border:0.7px solid #d6d6d6;box-sizing:border-box;"></div>
<div style="left:507.5px;top:256.5px;width:232.3px;height:29.2px;background:#fff;border:0.7px solid #d6d6d6;box-sizing:border-box;"></div>
<div style="left:507.5px;top:288.4px;width:232.3px;height:11.8px;background:#fff;border:0.7px solid #d6d6d6;box-sizing:border-box;"></div>
<svg style="left:729.5px;top:290.6px" width="8" height="7" viewBox="0 0 8 7"><path d="M.5 1.6 Q.5 .8 1.3 .8 L3 .8 L3.8 1.6 L6.6 1.6 Q7.4 1.6 7.4 2.4 L7.4 5.6 Q7.4 6.4 6.6 6.4 L1.3 6.4 Q.5 6.4 .5 5.6 Z" fill="#efc12e" stroke="#b58a12" stroke-width=".5"/></svg>
<div style="left:507.5px;top:303px;width:232.3px;height:11.6px;background:#fff;border:0.7px solid #d6d6d6;box-sizing:border-box;"></div>
<div style="left:730px;top:305px;width:8px;height:7.6px;background:#e3e3e3;border:0.5px solid #bdbdbd;box-sizing:border-box;"></div>
<div class="t" style="left:731.8px;top:306.1px;font-size:4.8px;line-height:6px;color:#222;font-weight:bold;">...</div>
<div style="left:507.5px;top:318.2px;width:232.3px;height:11.8px;background:#f1f1f1;border:0.7px solid #d6d6d6;box-sizing:border-box;"></div>
<div class="t" style="left:509px;top:319.0px;font-size:6.05px;line-height:10px;color:#333;">变更中</div>
<div style="left:507.5px;top:333px;width:232.3px;height:11px;background:#fff;border:0.7px solid #d6d6d6;box-sizing:border-box;"></div>
<div style="left:728.3px;top:334.3px;width:10.4px;height:8.4px;background:#e4e4e4;border:0.5px solid #d2d2d2;box-sizing:border-box;"></div>
<svg style="left:730.8px;top:336.8px" width="5.4" height="3.6" viewBox="0 0 5.4 3.6"><path d="M.3 .3 L5.1 .3 L2.7 3.4 Z" fill="#333"/></svg>
<div style="left:744.6px;top:193px;width:8px;height:153px;background:#f0f0f0;"></div>
<div style="left:745.4px;top:201px;width:6.4px;height:72px;background:#cdcdcd;"></div>
<svg style="left:746.4px;top:195.6px" width="4" height="3" viewBox="0 0 4 3"><path d="M2 .2 L3.8 2.8 L.2 2.8 Z" fill="#6a6a6a"/></svg>
<svg style="left:746.4px;top:342.2px" width="4" height="3" viewBox="0 0 4 3"><path d="M.2 .2 L3.8 .2 L2 2.8 Z" fill="#6a6a6a"/></svg>
<div style="left:706px;top:350px;width:20px;height:12.2px;background:#e3e3e3;border-radius:1.5px;"></div>
<div class="t" style="left:709.6px;top:351.3px;font-size:6.05px;line-height:10px;color:#111;text-shadow:0 0 .3px #111;">选择</div>
<div style="left:729.4px;top:350px;width:21.4px;height:12.2px;background:#e1e3ea;border:0.6px solid #d3d8e2;box-sizing:border-box;border-radius:1.5px;"></div>
<div class="t" style="left:733.6px;top:351.3px;font-size:6.05px;line-height:10px;color:#a4a9b5;">清除</div>
<div style="left:796.5px;top:76.6px;width:104px;height:0.7px;background:#d8d8d8;"></div>
<div class="t" style="left:758.6px;top:71.1px;font-size:6.0px;line-height:10px;color:#111;font-weight:500;">相关检出范围</div>
<svg style="left:758.6px;top:85.39999999999999px" width="4.4" height="3.6" viewBox="0 0 4.4 3.6"><path d="M.2 .2 L4.2 .2 L2.2 3.4 Z" fill="#444"/></svg>
<svg style="left:766.1999999999999px;top:83.39999999999999px" width="8" height="8" viewBox="0 0 8 8"><rect x=".5" y=".5" width="6.4" height="6.4" fill="#fff" stroke="#b9cfe2" stroke-width=".9"/><path d="M1.7 3.6 L3.1 5.4 L5.8 1.5" stroke="#b5c6d6" stroke-width="1.15" fill="none"/></svg>
<svg style="left:774px;top:83.3px" width="7.5" height="7.5" viewBox="0 0 7.5 7.5"><rect x=".3" y=".3" width="3.2" height="3.2" fill="#d63b30"/><rect x="4" y=".3" width="3.2" height="3.2" fill="#3f7fd4"/><rect x=".3" y="4" width="3.2" height="3.2" fill="#5cb531"/><rect x="4" y="4" width="3.2" height="3.2" fill="#f0c22b"/></svg>
<div class="t" style="left:784.8px;top:82.1px;font-size:6.0px;line-height:10px;color:#1010d8;font-weight:500;">HBGR2101 湖北鼓润2101</div>
<svg style="left:766.6px;top:96.39999999999999px" width="4.4" height="3.6" viewBox="0 0 4.4 3.6"><path d="M.2 .2 L4.2 .2 L2.2 3.4 Z" fill="#555"/></svg>
<svg style="left:774.0px;top:94.39999999999999px" width="8" height="8" viewBox="0 0 8 8"><rect x=".5" y=".5" width="6.4" height="6.4" fill="#fff" stroke="#333" stroke-width=".9"/><path d="M1.7 3.6 L3.1 5.4 L5.8 1.5" stroke="#111" stroke-width="1.15" fill="none"/></svg>
<svg style="left:782px;top:94.5px" width="9" height="7.4" viewBox="0 0 9 7.4"><path d="M.5 1.8 Q.5 .8 1.4 .8 L3.2 .8 L4 1.7 L7.4 1.7 Q8.3 1.7 8.3 2.6 L8.3 6 Q8.3 6.9 7.4 6.9 L1.4 6.9 Q.5 6.9 .5 6 Z" fill="#f2d64e" stroke="#8f7420" stroke-width=".7"/><path d="M1.3 3 L7.5 3 L7.5 6 L1.3 6 Z" fill="#faee9e"/></svg>
<div class="t" style="left:792.3px;top:93.1px;font-size:5.95px;line-height:10px;color:#000;font-weight:500;">产品和产品配置参数清单</div>
<svg style="left:774.8px;top:106.5px" width="4.4" height="3.6" viewBox="0 0 4.4 3.6"><path d="M.2 .2 L4.2 .2 L2.2 3.4 Z" fill="#8a8a8a"/></svg>
<svg style="left:782.1999999999999px;top:104.5px" width="8" height="8" viewBox="0 0 8 8"><rect x=".5" y=".5" width="6.4" height="6.4" fill="#fff" stroke="#333" stroke-width=".9"/><path d="M1.7 3.6 L3.1 5.4 L5.8 1.5" stroke="#111" stroke-width="1.15" fill="none"/></svg>
<svg style="left:790.4px;top:104.4px" width="8" height="7.6" viewBox="0 0 8 7.6"><rect x=".4" y=".4" width="7" height="6.8" rx=".8" fill="#8a5fc6" stroke="#5c3a96" stroke-width=".5"/><rect x="1.4" y="2.6" width="3" height="3.4" fill="#e9c8f0"/><rect x="4.8" y="3.4" width="1.8" height="2.6" fill="#f3a65a"/></svg>
<div class="t" style="left:800.3px;top:103.2px;font-size:5.95px;line-height:10px;color:#000;font-weight:500;">产品配置参数清单</div>
<svg style="left:790.1999999999999px;top:115.1px" width="8" height="8" viewBox="0 0 8 8"><rect x=".5" y=".5" width="6.4" height="6.4" fill="#fff" stroke="#333" stroke-width=".9"/><path d="M1.7 3.6 L3.1 5.4 L5.8 1.5" stroke="#111" stroke-width="1.15" fill="none"/></svg>
<svg style="left:797.6px;top:115.2px" width="9" height="7.4" viewBox="0 0 9 7.4"><path d="M.5 1.8 Q.5 .8 1.4 .8 L3.2 .8 L4 1.7 L7.4 1.7 Q8.3 1.7 8.3 2.6 L8.3 6 Q8.3 6.9 7.4 6.9 L1.4 6.9 Q.5 6.9 .5 6 Z" fill="#f2d64e" stroke="#8f7420" stroke-width=".7"/><path d="M1.3 3 L7.5 3 L7.5 6 L1.3 6 Z" fill="#faee9e"/></svg>
<div class="t" style="left:808.6px;top:113.8px;font-size:5.95px;line-height:10px;color:#000;font-weight:500;">产品和产品配置参数清单</div>
<div style="left:890.4px;top:370.8px;width:10px;height:12.6px;background:#e2e2e2;border-radius:1.5px 0 0 1.5px;"></div>
<svg style="left:893.6px;top:374px" width="6" height="6" viewBox="0 0 6 6"><rect x=".3" y=".5" width="5.4" height="4.8" fill="#222"/><rect x="2.4" y=".5" width="1.6" height="1.6" fill="#ddd"/></svg>
<div style="left:898px;top:397px;width:2px;height:11px;background:#a6a6a6;"></div>
<div style="left:898px;top:443px;width:2px;height:23px;background:#cfcfcf;"></div>
<div style="left:898px;top:462px;width:2px;height:19px;background:linear-gradient(#d9a690,#d9704a 40%);"></div>
<svg style="left:375px;top:128px" width="120" height="24" viewBox="375 128 120 24"><path d="M381.4 141.5 L475.6 136.9 L474.6 132.9 L486.8 138.7 L477.2 145.2 L476.4 143.3 L381.8 144.5 Z" fill="#de3e3c"/></svg>
</div></body></html>
